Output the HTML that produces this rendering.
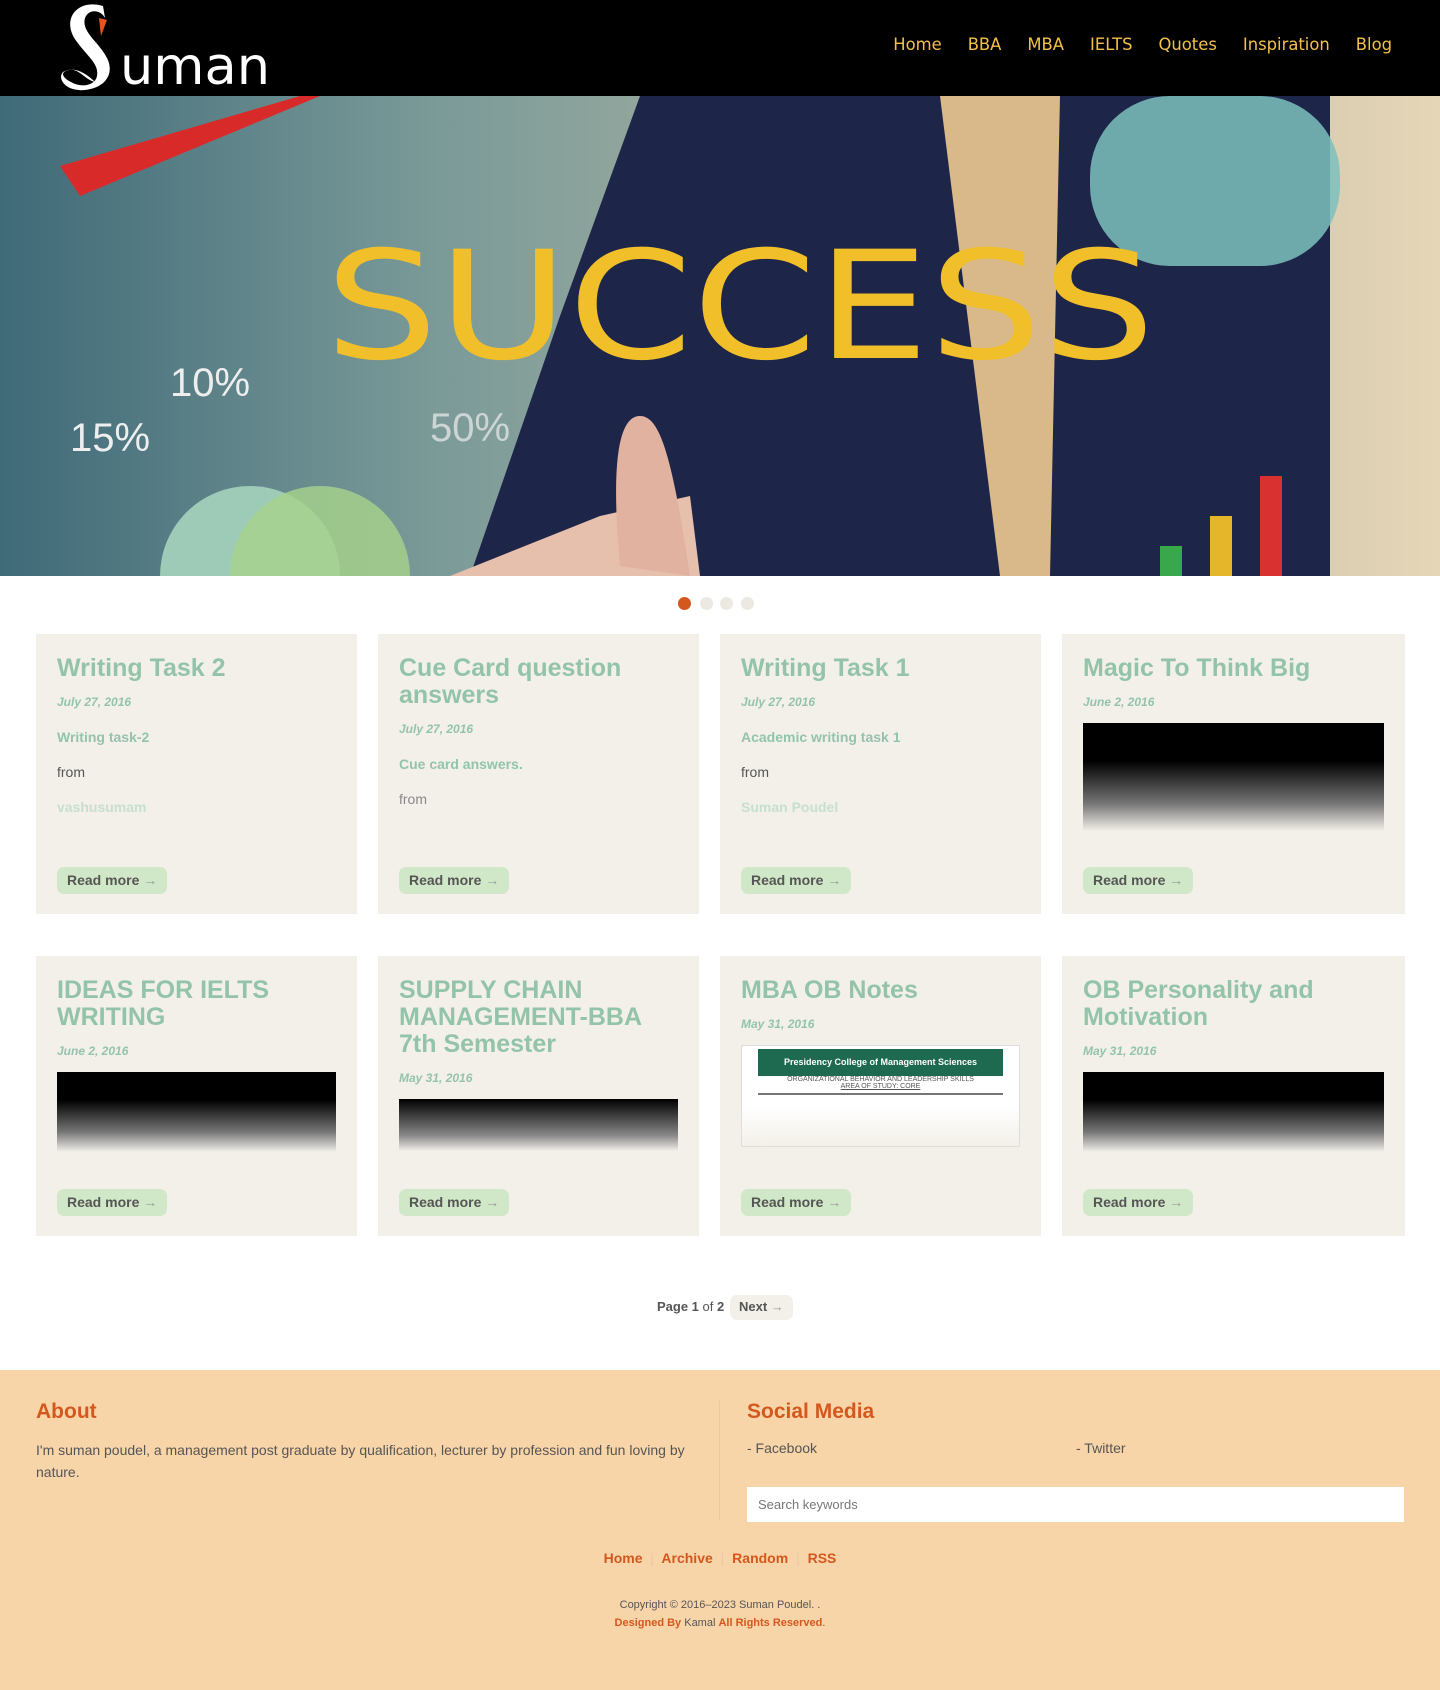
<!DOCTYPE html>
<html><head><meta charset="utf-8">
<style>
*{margin:0;padding:0;box-sizing:border-box}
body{width:1440px;height:1690px;background:#fff;font-family:"Liberation Sans","DejaVu Sans",sans-serif;position:relative;overflow:hidden}
.hdr{position:absolute;left:0;top:0;width:1440px;height:96px;background:#000}
.nav{position:absolute;top:35px;right:48px;display:flex;gap:26px;font-family:"DejaVu Sans",sans-serif;font-size:16.4px;color:#f4c04a}
.hero{position:absolute;left:0;top:96px;width:1440px;height:480px;overflow:hidden}
.dot{position:absolute;top:597px;width:13px;height:13px;border-radius:50%;background:#ece9e2}
.card{position:absolute;width:321px;height:280px;background:#f3f0e9;padding:20px 21px}
.card h2{font-family:"Liberation Sans",sans-serif;font-size:25px;line-height:27px;color:#93c4a9;font-weight:bold;margin-top:1px}
.date{font-size:12px;font-style:italic;font-weight:bold;color:#93c4a9;margin-top:13px}
.sub{font-size:14px;font-weight:bold;color:#93c4a9;margin-top:20px}
.from{font-size:14px;color:#555;margin-top:19px}
.auth{font-size:14px;font-weight:bold;color:#c7dfd0;margin-top:19px}
.btn{position:absolute;left:21px;top:233px;height:27px;padding:0 10px;line-height:27px;border-radius:7px;background:#d1e8c8;font-size:14px;font-weight:bold;color:#555}
.btn span{color:#999;font-weight:normal}
.img{margin-top:14px;height:108px;background:linear-gradient(#000 35%,#777 75%,#f3f0e9 100%)}
.foot{position:absolute;left:0;top:1370px;width:1440px;height:320px;background:#f8d5a8}
.ft{font-family:"Liberation Sans",sans-serif;font-size:21px;font-weight:bold;color:#d4581e}
</style></head><body>
<div class="hdr">
<svg width="270" height="96" style="position:absolute;left:55px;top:0">
<path d="M48 6 C22 -2 5 20 22 42 C34 58 44 64 42 76 C40 86 26 88 16 82 C8 78 4 72 14 70 C24 68 30 80 40 82 C30 72 18 66 8 72 C2 78 10 92 30 90 C50 88 60 74 52 58 C44 42 26 32 30 18 C34 8 46 10 50 18 Z" fill="#fff"/>
<path d="M44 18 L52 20 L46 36 Z" fill="#e8541e"/>
<text x="65" y="84" font-family="DejaVu Sans" font-size="52" fill="#fff" textLength="150" lengthAdjust="spacingAndGlyphs">uman</text>
</svg>
<div class="nav"><span>Home</span><span>BBA</span><span>MBA</span><span>IELTS</span><span>Quotes</span><span>Inspiration</span><span>Blog</span></div>
</div>
<div class="hero">
<svg width="1440" height="480" viewBox="0 0 1440 480">
<defs><linearGradient id="bg" x1="0" x2="1"><stop offset="0" stop-color="#3f6a78"/><stop offset="0.3" stop-color="#7a9a98"/><stop offset="0.8" stop-color="#c9c2a8"/><stop offset="1" stop-color="#e6d6b8"/></linearGradient></defs>
<rect width="1440" height="480" fill="url(#bg)"/>
<path d="M640 0 L1330 0 L1330 480 L470 480 L560 220 Z" fill="#1d2548"/>
<path d="M940 0 L1060 0 L1050 480 L1000 480 Z" fill="#d9b98a"/>
<path d="M600 420 L690 400 L700 480 L450 480 Z" fill="#e6c0ac"/>
<path d="M620 470 C610 360 620 320 640 320 C660 320 672 360 690 480 Z" fill="#e2b2a0"/>
<rect x="1090" y="0" width="250" height="170" rx="80" fill="#7cc1bd" opacity="0.85"/>
<path d="M60 70 L300 0 L320 0 L80 100Z" fill="#d92a2a"/>
<circle cx="250" cy="480" r="90" fill="#9dcbb8"/>
<circle cx="320" cy="480" r="90" fill="#a8d38b" opacity="0.8"/>
<text x="325" y="262" font-family="DejaVu Sans" font-size="150" fill="#f1bf2a" textLength="830" lengthAdjust="spacingAndGlyphs">SUCCESS</text>
<text x="170" y="300" font-size="40" fill="#eee">10%</text>
<text x="70" y="355" font-size="40" fill="#eee">15%</text>
<text x="430" y="345" font-size="40" fill="#eee" opacity="0.7">50%</text>
<rect x="1160" y="450" width="22" height="30" fill="#39a84a"/><rect x="1210" y="420" width="22" height="60" fill="#e5b52a"/><rect x="1260" y="380" width="22" height="100" fill="#d93030"/>
</svg>
</div>
<div class="dot" style="left:678px;background:#d4581e"></div>
<div class="dot" style="left:700px"></div>
<div class="dot" style="left:720px"></div>
<div class="dot" style="left:741px"></div>

<div class="card" style="left:36px;top:634px"><h2>Writing Task 2</h2><div class="date">July 27, 2016</div><div class="sub">Writing task-2</div><div class="from">from</div><div class="auth">vashusumam</div><div class="btn">Read more <span>→</span></div></div>
<div class="card" style="left:378px;top:634px"><h2>Cue Card question answers</h2><div class="date">July 27, 2016</div><div class="sub">Cue card answers.</div><div class="from" style="color:#888">from</div><div class="btn">Read more <span>→</span></div></div>
<div class="card" style="left:720px;top:634px"><h2>Writing Task 1</h2><div class="date">July 27, 2016</div><div class="sub">Academic writing task 1</div><div class="from">from</div><div class="auth">Suman Poudel</div><div class="btn">Read more <span>→</span></div></div>
<div class="card" style="left:1062px;top:634px;width:343px"><h2>Magic To Think Big</h2><div class="date">June 2, 2016</div><div class="img"></div><div class="btn">Read more <span>→</span></div></div>

<div class="card" style="left:36px;top:956px"><h2>IDEAS FOR IELTS WRITING</h2><div class="date">June 2, 2016</div><div class="img" style="height:80px"></div><div class="btn">Read more <span>→</span></div></div>
<div class="card" style="left:378px;top:956px"><h2>SUPPLY CHAIN MANAGEMENT-BBA 7th Semester</h2><div class="date">May 31, 2016</div><div class="img" style="height:52px;background:linear-gradient(#000,#888 70%,#f3f0e9)"></div><div class="btn">Read more <span>→</span></div></div>
<div class="card" style="left:720px;top:956px"><h2>MBA OB Notes</h2><div class="date">May 31, 2016</div><div class="img" style="height:102px;background:linear-gradient(#fff 60%,#f3f0e9);border:1px solid #ddd;padding:3px 16px"><div style="height:27px;background:#1e6a50;color:#fff;font-size:9px;font-weight:bold;text-align:center;line-height:27px">Presidency College of Management Sciences</div><div style="font-size:7px;text-align:center;color:#555">ORGANIZATIONAL BEHAVIOR AND LEADERSHIP SKILLS<br><u>AREA OF STUDY: CORE</u></div><div style="border-top:2px solid #777;margin-top:3px"></div></div><div class="btn">Read more <span>→</span></div></div>
<div class="card" style="left:1062px;top:956px;width:343px"><h2>OB Personality and Motivation</h2><div class="date">May 31, 2016</div><div class="img" style="height:80px"></div><div class="btn">Read more <span>→</span></div></div>

<div style="position:absolute;left:657px;top:1299px;font-size:13px;color:#555"><b>Page 1</b> of <b>2</b></div>
<div style="position:absolute;left:730px;top:1295px;height:25px;padding:0 9px;line-height:24px;border-radius:7px;background:#f3f0e9;font-size:13px;font-weight:bold;color:#555">Next <span style="color:#999;font-weight:normal">→</span></div>

<div class="foot">
<div class="ft" style="position:absolute;left:36px;top:30px">About</div>
<div style="position:absolute;left:36px;top:69px;width:660px;font-size:14px;line-height:22px;color:#555">I'm suman poudel, a management post graduate by qualification, lecturer by profession and fun loving by nature.</div>
<div style="position:absolute;left:719px;top:31px;height:120px;border-left:1px solid #e6c9a6"></div>
<div class="ft" style="position:absolute;left:747px;top:30px">Social Media</div>
<div style="position:absolute;left:747px;top:70px;font-size:14px;color:#555">- Facebook</div>
<div style="position:absolute;left:1076px;top:70px;font-size:14px;color:#555">- Twitter</div>
<div style="position:absolute;left:747px;top:117px;width:657px;height:35px;background:#fff;font-size:13px;color:#777;padding:10px 11px">Search keywords</div>
<div style="position:absolute;left:0;width:1440px;top:180px;text-align:center;font-size:14px;font-weight:bold;color:#d4581e;word-spacing:4px">Home <span style="color:#e6c9a6;font-weight:normal">|</span> Archive <span style="color:#e6c9a6;font-weight:normal">|</span> Random <span style="color:#e6c9a6;font-weight:normal">|</span> RSS</div>
<div style="position:absolute;left:0;width:1440px;top:229px;text-align:center;font-size:11px;color:#555">Copyright © 2016–2023 Suman Poudel. .</div>
<div style="position:absolute;left:0;width:1440px;top:247px;text-align:center;font-size:11px;color:#555"><b style="color:#d4581e">Designed By</b> Kamal <b style="color:#d4581e">All Rights Reserved</b>.</div>
</div>
</body></html>
